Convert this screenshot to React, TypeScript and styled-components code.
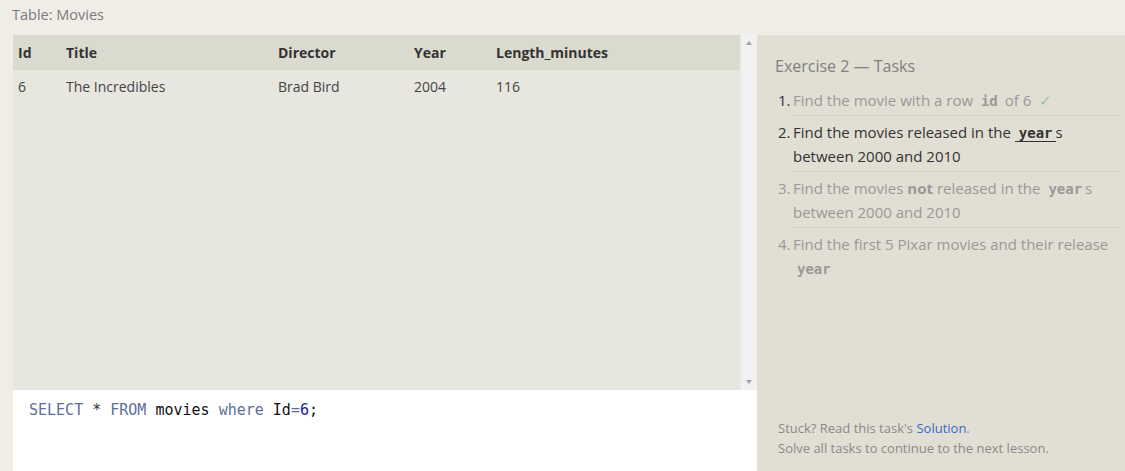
import React from "react";
import styled, { createGlobalStyle } from "styled-components";

const Global = createGlobalStyle`
  html, body { margin: 0; padding: 0; }
  body {
    background: #efede6;
    font-family: "Open Sans", "Noto Sans", sans-serif;
    width: 1125px;
    height: 471px;
    overflow: hidden;
  }
`;

const Page = styled.div`
  display: flex;
  flex-direction: column;
  width: 1125px;
  height: 471px;
`;

const Caption = styled.div`
  height: 35px;
  box-sizing: border-box;
  padding: 5px 0 0 12px;
  font-size: 14.5px;
  color: #7b7b7b;
  line-height: 20px;
`;

const Main = styled.div`
  flex: 1;
  display: flex;
  padding-left: 13px;
  min-height: 0;
`;

const LeftCol = styled.div`
  width: 744px;
  display: flex;
  flex-direction: column;
`;

const TableWrap = styled.div`
  height: 355px;
  display: flex;
  background: #e8e7df;
`;

const TableArea = styled.div`
  flex: 1;
`;

const Table = styled.table`
  border-collapse: collapse;
  width: 100%;
  font-size: 14px;
  color: #333;
`;

const Th = styled.th<{ w?: number }>`
  background: #dbdacf;
  text-align: left;
  font-weight: 700;
  height: 35px;
  padding: 0 0 0 5px;
  width: ${(p) => (p.w ? `${p.w - 5}px` : "auto")};
  color: #333;
`;

const Td = styled.td`
  height: 32px;
  padding: 0 0 0 5px;
  color: #444;
  vertical-align: middle;
`;

const Scrollbar = styled.div`
  width: 17px;
  background: #f1f1f1;
  border-left: 1px solid #e6e6e6;
  display: flex;
  flex-direction: column;
  justify-content: space-between;
  align-items: center;
  padding: 6px 0;
  box-sizing: border-box;
`;

const Arrow = styled.div<{ down?: boolean }>`
  width: 0;
  height: 0;
  border-left: 3.5px solid transparent;
  border-right: 3.5px solid transparent;
  ${(p) =>
    p.down
      ? "border-top: 4px solid #a3a3a3;"
      : "border-bottom: 4px solid #a3a3a3;"}
`;

const Editor = styled.div`
  flex: 1;
  background: #fff;
  padding: 10px 0 0 16px;
  font-family: "DejaVu Sans Mono", "Liberation Mono", monospace;
  font-size: 15px;
  line-height: 20px;
  color: #111;
`;

const Tok = styled.span<{ c: string }>`
  color: ${(p) => p.c};
`;

const RightCol = styled.div`
  flex: 1;
  background: #e1ded3;
  display: flex;
  flex-direction: column;
  padding: 19px 5px 0 18px;
`;

const Heading = styled.div`
  font-size: 16px;
  color: #808080;
  line-height: 24px;
  margin-bottom: 10px;
`;

const List = styled.ol`
  margin: 0;
  padding: 0 0 0 3px;
  list-style: none;
`;

const Item = styled.li<{ active?: boolean; last?: boolean }>`
  display: flex;
  font-size: 15px;
  line-height: 24px;
  color: ${(p) => (p.active ? "#333" : "#999")};
  padding-bottom: 4px;
  margin-bottom: 4px;
  position: relative;
  &::after {
    content: "";
    display: ${(p) => (p.last ? "none" : "block")};
    position: absolute;
    left: 13px;
    right: 0;
    bottom: 0;
    height: 1px;
    background: #d5d2c7;
  }
`;

const Num = styled.span<{ dark?: boolean }>`
  width: 15px;
  flex: none;
  ${(p) => (p.dark ? "color: #333;" : "")}
`;

const ItemText = styled.span``;

const Code = styled.code<{ underline?: boolean }>`
  font-family: "DejaVu Sans Mono", "Liberation Mono", monospace;
  font-weight: 700;
  font-size: 14px;
  line-height: 1;
  padding: 0 3px 0 4px;
  ${(p) => (p.underline ? "border-bottom: 1.5px solid #333;" : "")}
`;

const Check = styled.span`
  color: #9cc79c;
  margin-left: 8px;
`;

const Footer = styled.div`
  margin-top: auto;
  padding: 0 0 13px 3px;
  font-size: 13px;
  line-height: 20px;
  color: #8a8a8a;
`;

const Link = styled.a`
  color: #3a6bc9;
  text-decoration: none;
`;

export default function App() {
  return (
    <Page>
      <Global />
      <Caption>Table: Movies</Caption>
      <Main>
        <LeftCol>
          <TableWrap>
            <TableArea>
              <Table>
                <thead>
                  <tr>
                    <Th w={48}>Id</Th>
                    <Th w={212}>Title</Th>
                    <Th w={136}>Director</Th>
                    <Th w={82}>Year</Th>
                    <Th>Length_minutes</Th>
                  </tr>
                </thead>
                <tbody>
                  <tr>
                    <Td>6</Td>
                    <Td>The Incredibles</Td>
                    <Td>Brad Bird</Td>
                    <Td>2004</Td>
                    <Td>116</Td>
                  </tr>
                </tbody>
              </Table>
            </TableArea>
            <Scrollbar>
              <Arrow />
              <Arrow down />
            </Scrollbar>
          </TableWrap>
          <Editor>
            <Tok c="#5c6e9a">SELECT</Tok> <Tok c="#333">*</Tok>{" "}
            <Tok c="#5c6e9a">FROM</Tok> <Tok c="#111">movies</Tok>{" "}
            <Tok c="#5c6e9a">where</Tok> <Tok c="#111">Id</Tok>
            <Tok c="#5c6e9a">=</Tok>
            <Tok c="#1a1aa6">6</Tok>
            <Tok c="#111">;</Tok>
          </Editor>
        </LeftCol>
        <RightCol>
          <Heading>Exercise 2 — Tasks</Heading>
          <List>
            <Item>
              <Num dark>1.</Num>
              <ItemText>
                Find the movie with a row <Code>id</Code> of 6
                <Check>✓</Check>
              </ItemText>
            </Item>
            <Item active>
              <Num>2.</Num>
              <ItemText>
                Find the movies released in the <Code underline>year</Code>s
                between 2000 and 2010
              </ItemText>
            </Item>
            <Item>
              <Num>3.</Num>
              <ItemText>
                Find the movies <b>not</b> released in the <Code>year</Code>s
                between 2000 and 2010
              </ItemText>
            </Item>
            <Item last>
              <Num>4.</Num>
              <ItemText>
                Find the first 5 Pixar movies and their release{" "}
                <Code>year</Code>
              </ItemText>
            </Item>
          </List>
          <Footer>
            Stuck? Read this task's <Link href="#">Solution</Link>.
            <br />
            Solve all tasks to continue to the next lesson.
          </Footer>
        </RightCol>
      </Main>
    </Page>
  );
}
